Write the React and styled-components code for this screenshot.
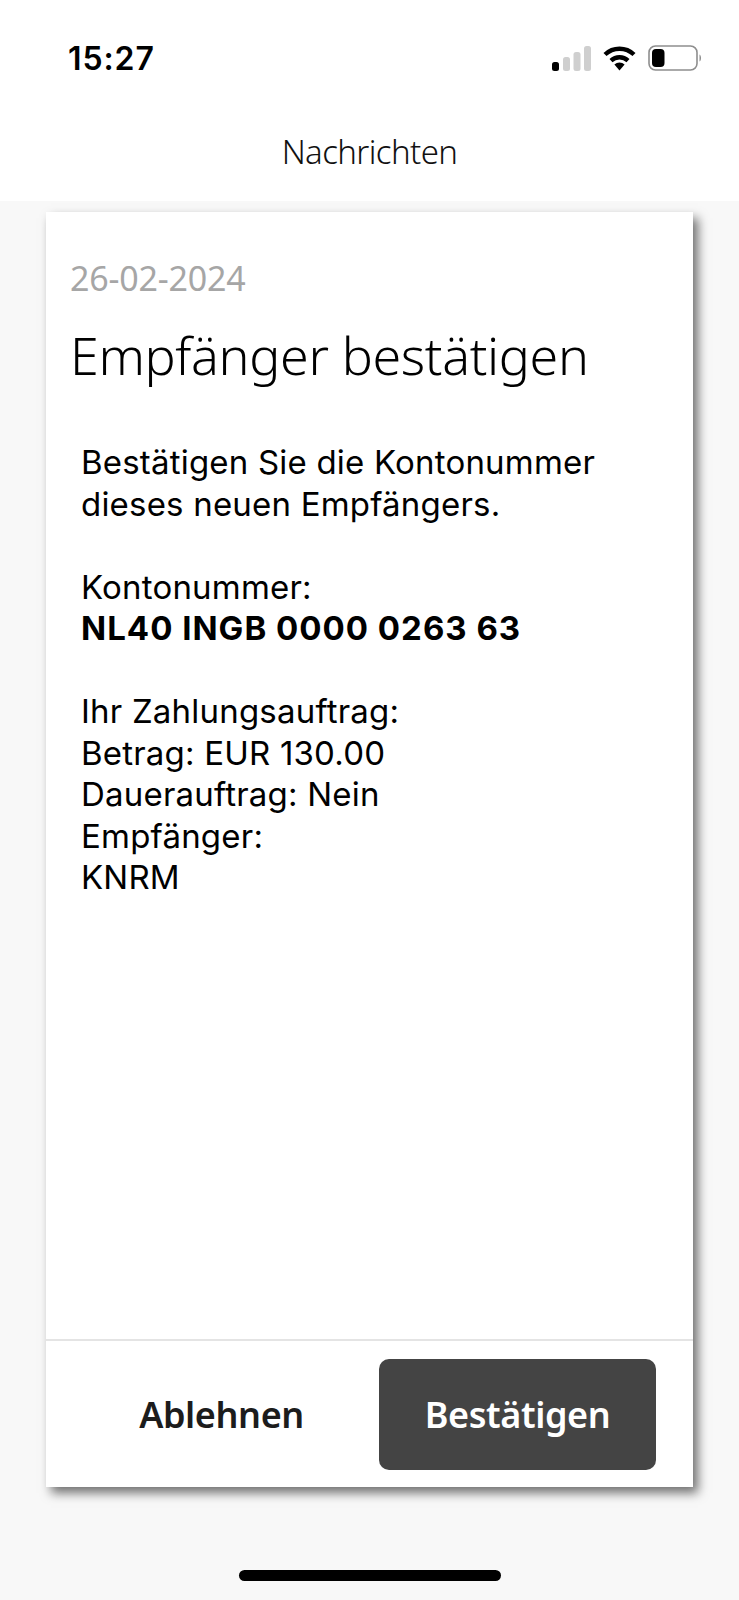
import React from 'react'
import styled, { createGlobalStyle } from 'styled-components'

const GlobalStyle = createGlobalStyle`
  html, body { margin: 0; padding: 0; background: #f8f8f8; }
`

const Page = styled.div`
  width: 739px;
  height: 1600px;
  display: flex;
  flex-direction: column;
  overflow: hidden;
  background: #f8f8f8;
  font-family: Inter, "Liberation Sans", sans-serif;
  color: #000;
`

const Top = styled.header`
  height: 201px;
  background: #fff;
  display: flex;
  flex-direction: column;
`

const StatusBar = styled.div`
  display: flex;
  justify-content: space-between;
  align-items: center;
  padding: 40px 37px 0 68px;
  height: 36px;
`

const Time = styled.span`
  font-family: Inter, sans-serif;
  font-size: 32px;
  font-weight: 600;
  letter-spacing: 0.9px;
`

const StatusIcons = styled.div`
  display: flex;
  align-items: center;
  gap: 12px;
`

const Title = styled.div`
  margin-top: 54px;
  text-align: center;
  font-family: "Noto Sans", sans-serif;
  font-weight: 300;
  font-size: 33px;
  line-height: 44px;
  letter-spacing: -0.6px;
  color: #111;
`

const Card = styled.main`
  margin: 11px 46px 0;
  width: 647px;
  height: 1275px;
  background: #fff;
  display: flex;
  flex-direction: column;
  box-shadow: 5px 6px 10px rgba(0, 0, 0, 0.55);
`

const Content = styled.div`
  flex: 1;
  padding: 44px 24px 0;
`

const DateLine = styled.div`
  font-family: "Noto Sans", sans-serif;
  font-size: 34px;
  line-height: 44px;
  color: #a6a6a6;
  letter-spacing: -0.2px;
`

const Heading = styled.h1`
  margin: 20px 0 0;
  font-family: "Noto Sans", sans-serif;
  font-weight: 300;
  font-size: 52px;
  line-height: 70px;
  letter-spacing: -0.35px;
`

const Body = styled.div`
  margin-top: 52px;
  padding-left: 11px;
  font-size: 33px;
  line-height: 41.5px;
  letter-spacing: 0.2px;
`

const Para = styled.p`
  margin: 0 0 41.5px;
`

const Strong = styled.strong`
  font-weight: 700;
  letter-spacing: 1px;
`

const Footer = styled.footer`
  height: 148px;
  box-sizing: border-box;
  border-top: 2px solid #e4e4e4;
  display: flex;
  align-items: flex-start;
  padding: 18px 37px 0 0;
`

const Button = styled.button`
  width: ${p => (p.$primary ? '277px' : '333px')};
  height: 111px;
  border: 0;
  border-radius: 10px;
  background: ${p => (p.$primary ? '#444444' : 'transparent')};
  color: ${p => (p.$primary ? '#fff' : '#1c1c1c')};
  font-family: "Noto Sans", sans-serif;
  font-weight: 600;
  font-size: 36px;
  letter-spacing: -0.4px;
  padding: ${p => (p.$primary ? '0' : '0 0 0 18px')};
`

const HomeArea = styled.div`
  flex: 1;
  display: flex;
  justify-content: center;
  padding-top: 83px;
`

const HomeBar = styled.div`
  width: 262px;
  height: 11px;
  border-radius: 6px;
  background: #000;
`

const Signal = () => (
  <svg width="39" height="25" viewBox="0 0 39 25">
    <rect x="0" y="16" width="7" height="9" rx="2.5" fill="#000" />
    <rect x="11" y="11" width="7" height="14" rx="2.5" fill="#cfcfcf" />
    <rect x="21.5" y="6" width="7" height="19" rx="2.5" fill="#cfcfcf" />
    <rect x="32" y="0" width="7" height="25" rx="2.5" fill="#cfcfcf" />
  </svg>
)

const Wifi = () => (
  <svg width="33" height="25" viewBox="0 0 33 25">
    <path d="M2 8.5 A21 21 0 0 1 31 8.5" fill="none" stroke="#000" strokeWidth="4.4" />
    <path d="M8 14.6 A12.6 12.6 0 0 1 25 14.6" fill="none" stroke="#000" strokeWidth="4.4" />
    <path d="M11.4 18.6 A7.5 7.5 0 0 1 21.6 18.6 L16.5 24.6 Z" fill="#000" />
  </svg>
)

const Battery = () => (
  <svg width="54" height="26" viewBox="0 0 54 26">
    <rect x="1" y="1" width="48" height="24" rx="6.5" fill="none" stroke="#8e8e8e" strokeWidth="1.6" />
    <rect x="4" y="4" width="12.5" height="18" rx="4" fill="#000" />
    <path d="M51.5 9.5 C53.5 10.5 53.5 15.5 51.5 16.5 Z" fill="#8e8e8e" />
  </svg>
)

export default function App() {
  return (
    <Page>
      <GlobalStyle />
      <Top>
        <StatusBar>
          <Time>15:27</Time>
          <StatusIcons>
            <Signal />
            <Wifi />
            <Battery />
          </StatusIcons>
        </StatusBar>
        <Title>Nachrichten</Title>
      </Top>
      <Card>
        <Content>
          <DateLine>26-02-2024</DateLine>
          <Heading>Empfänger bestätigen</Heading>
          <Body>
            <Para>Bestätigen Sie die Kontonummer<br />dieses neuen Empfängers.</Para>
            <Para>Kontonummer:<br /><Strong>NL40 INGB 0000 0263 63</Strong></Para>
            <Para>
              Ihr Zahlungsauftrag:<br />
              Betrag: EUR 130.00<br />
              Dauerauftrag: Nein<br />
              Empfänger:<br />
              KNRM
            </Para>
          </Body>
        </Content>
        <Footer>
          <Button>Ablehnen</Button>
          <Button $primary>Bestätigen</Button>
        </Footer>
      </Card>
      <HomeArea>
        <HomeBar />
      </HomeArea>
    </Page>
  )
}
